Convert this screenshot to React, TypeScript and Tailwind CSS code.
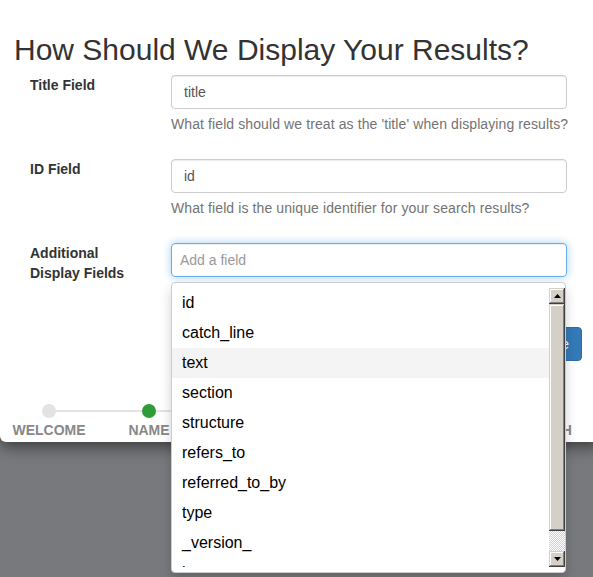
import React from "react";

const fields = [
  "id",
  "catch_line",
  "text",
  "section",
  "structure",
  "refers_to",
  "referred_to_by",
  "type",
  "_version_",
  "issue",
];

const steps = [
  { label: "WELCOME", done: false },
  { label: "NAME", done: true },
  { label: "FIELDS", done: false },
  { label: "DISPLAY", done: false },
  { label: "SEARCH", done: false },
  { label: "FINISH", done: false },
];

const bevel =
  "bg-[#d4d0c8] shadow-[inset_-1px_-1px_#404040,inset_1px_1px_#d4d0c8,inset_-2px_-2px_#808080,inset_2px_2px_#ffffff]";

function Arrow({ up }: { up?: boolean }) {
  return (
    <div className={`h-[16px] ${bevel} flex items-center justify-center`}>
      <svg width="7" height="4" viewBox="0 0 7 4">
        {up ? (
          <polygon points="3.5,0 7,4 0,4" fill="#000" />
        ) : (
          <polygon points="0,0 7,0 3.5,4" fill="#000" />
        )}
      </svg>
    </div>
  );
}

function Scrollbar() {
  return (
    <div className="w-[16px] flex flex-col shrink-0">
      <Arrow up />
      <div className={`h-[227px] ${bevel}`} />
      <div className="flex-1 bg-[repeating-conic-gradient(#d4d0c8_0_25%,#ffffff_0_50%)] bg-[length:2px_2px]" />
      <Arrow />
    </div>
  );
}

function Row({
  label,
  children,
  help,
}: {
  label: string;
  children: React.ReactNode;
  help?: string;
}) {
  return (
    <div className="grid grid-cols-[141px_396px]">
      <label className="pr-[30px] text-[14px] leading-[20px] font-bold text-[#333]">
        {label}
      </label>
      <div className="relative">
        {children}
        {help && (
          <p className="mt-[5px] text-[14px] leading-[20px] tracking-[0.1px] text-[#737373] whitespace-nowrap">
            {help}
          </p>
        )}
      </div>
    </div>
  );
}

export default function App() {
  return (
    <div className="h-[577px] w-[593px] overflow-hidden bg-[#77797c] font-['Liberation_Sans',Arial,sans-serif]">
      <div className="relative h-[442px] w-[600px] bg-white rounded-bl-[6px] shadow-[0_5px_15px_rgba(0,0,0,0.5)] pt-[33px]">
        <h3 className="pl-[14px] text-[30px] leading-[33px] text-[#333]">
          How Should We Display Your Results?
        </h3>

        <div className="mt-[9px] pl-[30px] flex flex-col gap-[25px]">
          <Row
            label="Title Field"
            help="What field should we treat as the 'title' when displaying results?"
          >
            <div className="h-[34px] border border-[#ccc] rounded-[4px] px-[12px] flex items-center text-[14px] text-[#555] shadow-[inset_0_1px_1px_rgba(0,0,0,0.075)]">
              title
            </div>
          </Row>
          <Row
            label="ID Field"
            help="What field is the unique identifier for your search results?"
          >
            <div className="h-[34px] border border-[#ccc] rounded-[4px] px-[12px] flex items-center text-[14px] text-[#555] shadow-[inset_0_1px_1px_rgba(0,0,0,0.075)]">
              id
            </div>
          </Row>
          <Row label="Additional Display Fields">
            <div className="h-[34px] border border-[#66afe9] rounded-[4px] pl-[8px] flex items-center text-[14px] text-[#999] shadow-[inset_0_1px_1px_rgba(0,0,0,0.075),0_0_8px_rgba(102,175,233,0.6)]">
              Add a field
            </div>
            <div className="absolute z-10 left-0 top-[39px] w-[395px] h-[291px] bg-white border border-[#ccc] rounded-[4px] shadow-[0_6px_12px_rgba(0,0,0,0.175)] py-[5px]">
              <div className="flex h-full">
                <ul className="flex-1 overflow-hidden">
                  {fields.map((f) => (
                    <li
                      key={f}
                      className={`h-[30px] leading-[30px] pl-[10px] text-[16px] text-black ${
                        f === "text" ? "bg-[#f4f4f4]" : ""
                      }`}
                    >
                      {f}
                    </li>
                  ))}
                </ul>
                <Scrollbar />
              </div>
            </div>
          </Row>
        </div>

        <div className="mt-[44px] pr-[11px] flex justify-end w-[593px]">
          <button className="h-[34px] px-[12px] rounded-[4px] bg-[#337ab7] border border-[#2e6da4] text-white text-[14px]">
            Continue
          </button>
        </div>

        <div className="mt-[43px] ml-[42px] flex items-center h-[14px]">
          {steps.map((s, i) => (
            <React.Fragment key={s.label}>
              <div
                className={`w-[14px] h-[14px] rounded-full shrink-0 ${
                  s.done ? "bg-[#2e9c37]" : "bg-[#e3e3e3]"
                }`}
              />
              {i < steps.length - 1 && (
                <div className="w-[86px] h-[2px] bg-[#e3e3e3] shrink-0" />
              )}
            </React.Fragment>
          ))}
        </div>
        <div className="mt-[2px] ml-[-1px] flex">
          {steps.map((s) => (
            <div
              key={s.label}
              className="w-[100px] shrink-0 text-center text-[14px] leading-[20px] font-bold text-[#888]"
            >
              {s.label}
            </div>
          ))}
        </div>
      </div>
    </div>
  );
}
